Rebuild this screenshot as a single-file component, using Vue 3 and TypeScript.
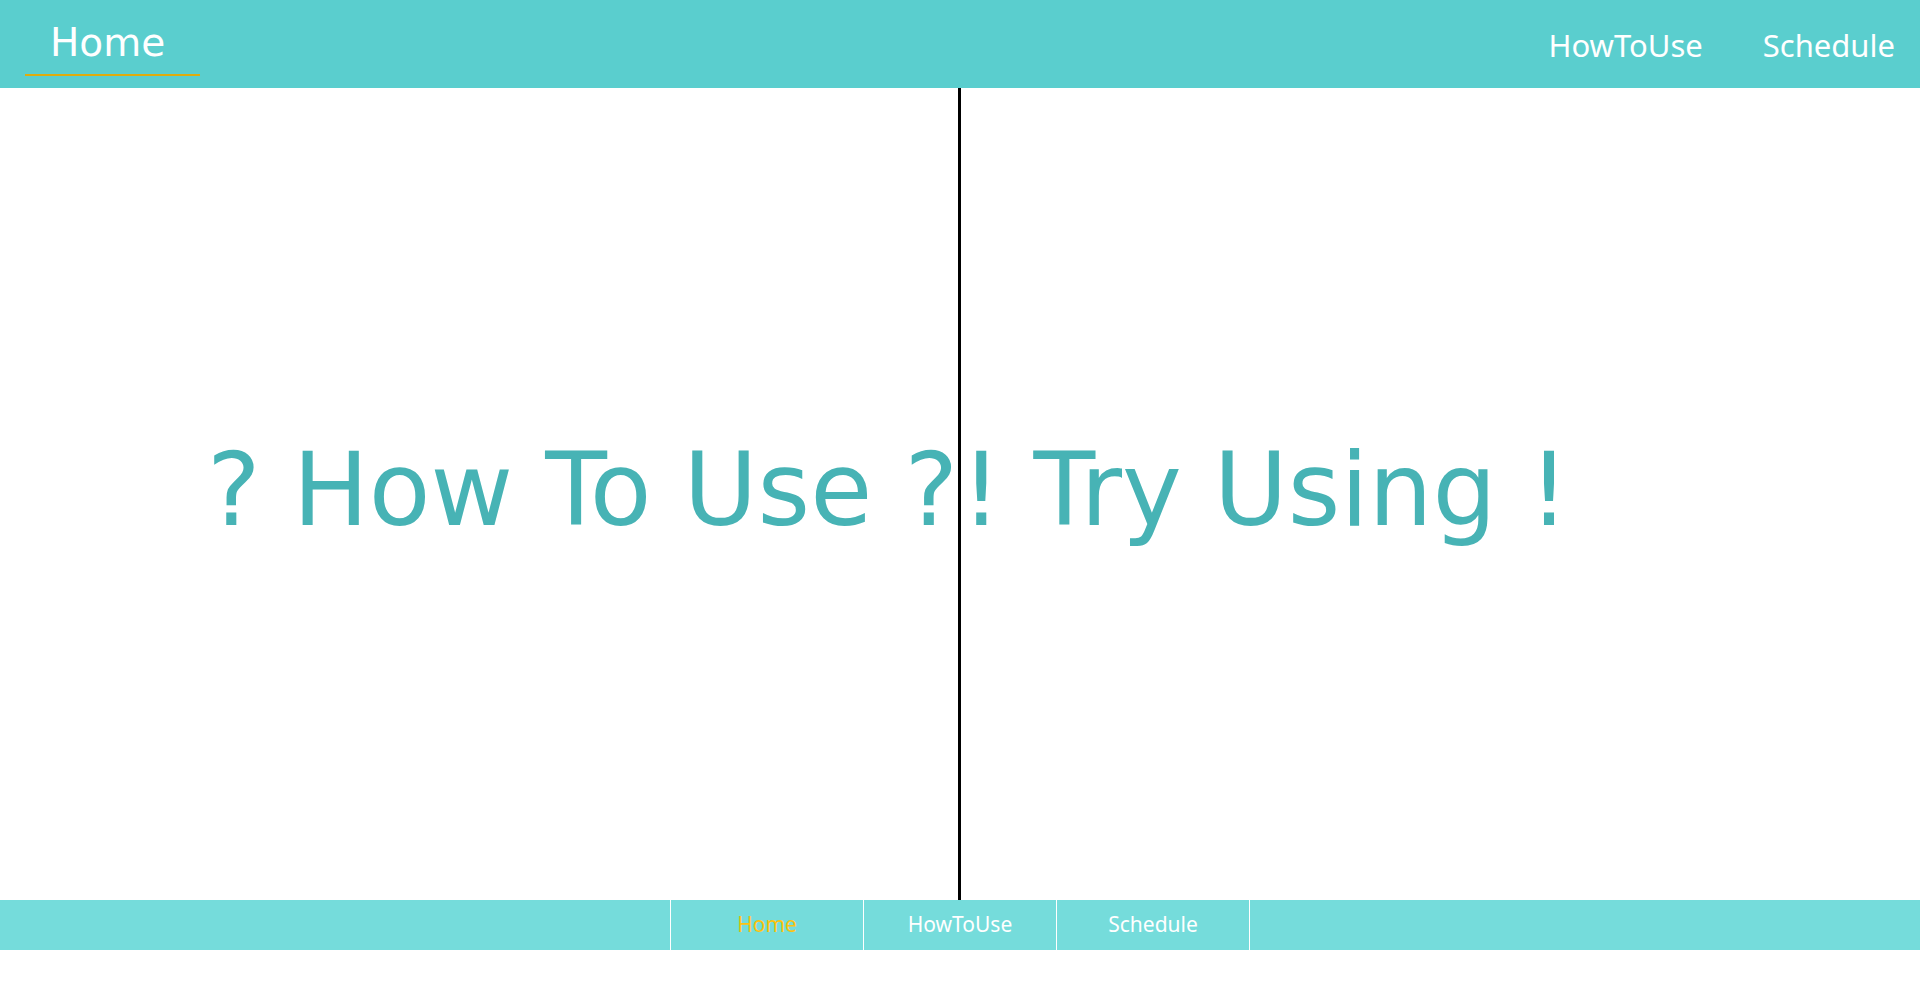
<script setup lang="ts">
const links = ['HowToUse', 'Schedule']
</script>

<template>
  <div class="page">
    <header class="top">
      <a class="brand" href="#">Home</a>
      <nav class="menu"><a v-for="l in links" :key="l" href="#">{{ l }}</a></nav>
    </header>
    <main class="panels">
      <section class="panel left"><a href="#">? How To Use ?</a></section>
      <section class="panel right"><a href="#">! Try Using !</a></section>
    </main>
    <footer class="bottom">
      <nav class="tabs">
        <a class="active" href="#">Home</a>
        <a v-for="l in links" :key="l" href="#">{{ l }}</a>
      </nav>
    </footer>
  </div>
</template>

<style scoped>
.page { min-height: 100vh; background: #fff; font-family: Verdana, "DejaVu Sans", sans-serif; display: flex; flex-direction: column; }
a { color: #fff; text-decoration: none; white-space: nowrap; }
.top { height: 88px; background: #5acece; display: flex; justify-content: space-between; align-items: center; }
.brand { width: 150px; margin: 0 0 4px 25px; padding: 4px 0 0 25px; font-size: 39px; line-height: 62px; border-bottom: 2px solid #dfac0c; }
.menu { display: flex; gap: 60px; padding: 2px 25px 0 0; font: 31px/44px "Noto Sans", sans-serif; }
.panels { display: flex; height: 812px; }
.panel { box-sizing: border-box; display: flex; align-items: center; padding-bottom: 8px; }
.panel a { color: #47b3b5; font-size: 101px; }
.left { width: calc(50% + 1px); flex: none; border-right: 3px solid #000; justify-content: flex-end; }
.right { flex: 1; }
.bottom { height: 50px; display: flex; justify-content: center; background: #75dcdb; }
.tabs { display: flex; border-left: 1px solid #fff; font: 21px/48px "Noto Sans", sans-serif; }
.tabs a { width: 192px; text-align: center; border-right: 1px solid #fff; }
.tabs .active { color: #fdc310; }
</style>
